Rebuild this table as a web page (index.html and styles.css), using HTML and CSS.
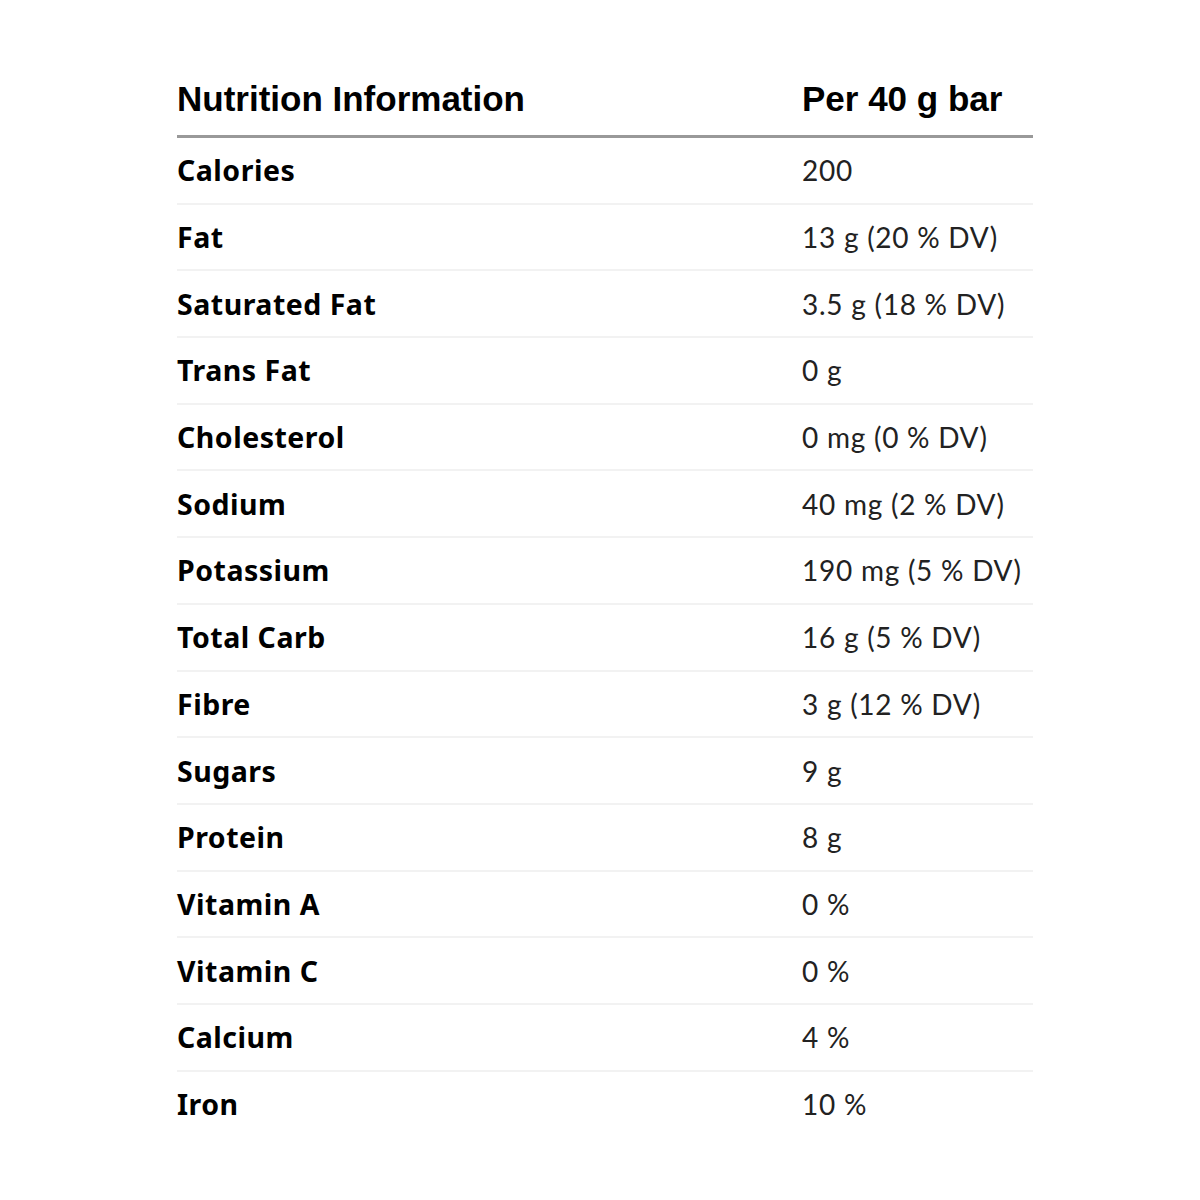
FILE: index.html
```html
<!DOCTYPE html>
<html>
<head>
<meta charset="utf-8">
<link rel="stylesheet" href="styles.css">
</head>
<body>
<table class="nutrition">
  <thead>
    <tr><th class="head-name">Nutrition Information</th><th class="head-value">Per 40 g bar</th></tr>
  </thead>
  <tbody>
    <tr><td class="name">Calories</td><td class="value">200</td></tr>
    <tr><td class="name">Fat</td><td class="value">13 g (20 % DV)</td></tr>
    <tr><td class="name">Saturated Fat</td><td class="value">3.5 g (18 % DV)</td></tr>
    <tr><td class="name">Trans Fat</td><td class="value">0 g</td></tr>
    <tr><td class="name">Cholesterol</td><td class="value">0 mg (0 % DV)</td></tr>
    <tr><td class="name">Sodium</td><td class="value">40 mg (2 % DV)</td></tr>
    <tr><td class="name">Potassium</td><td class="value">190 mg (5 % DV)</td></tr>
    <tr><td class="name">Total Carb</td><td class="value">16 g (5 % DV)</td></tr>
    <tr><td class="name">Fibre</td><td class="value">3 g (12 % DV)</td></tr>
    <tr><td class="name">Sugars</td><td class="value">9 g</td></tr>
    <tr><td class="name">Protein</td><td class="value">8 g</td></tr>
    <tr><td class="name">Vitamin A</td><td class="value">0 %</td></tr>
    <tr><td class="name">Vitamin C</td><td class="value">0 %</td></tr>
    <tr><td class="name">Calcium</td><td class="value">4 %</td></tr>
    <tr><td class="name">Iron</td><td class="value">10 %</td></tr>
  </tbody>
</table>
</body>
</html>
```
FILE: styles.css
```css
html, body {
  margin: 0;
  padding: 0;
  background: #fff;
}
body {
  padding: 62px 0 0 177px;
}
.nutrition {
  width: 856px;
  border-collapse: collapse;
  border-spacing: 0;
}
.nutrition th {
  font-family: "Liberation Sans", Arial, sans-serif;
  font-weight: bold;
  font-size: 35px;
  color: #000;
  text-align: left;
  height: 73px;
  padding: 0;
  vertical-align: middle;
  border-bottom: 3px solid #999;
}
.head-name {
  width: 625px;
}
.nutrition td {
  height: 64.7px;
  padding: 0;
  vertical-align: middle;
  border-bottom: 2px solid #f2f2f2;
}
.nutrition tbody tr:last-child td {
  border-bottom: none;
}
.name {
  font-family: "Noto Sans", sans-serif;
  font-weight: bold;
  font-size: 28.5px;
  letter-spacing: 0.5px;
  color: #000;
}
.value {
  font-family: Lato, sans-serif;
  font-size: 28px;
  letter-spacing: 0.75px;
  color: #222;
}
```
